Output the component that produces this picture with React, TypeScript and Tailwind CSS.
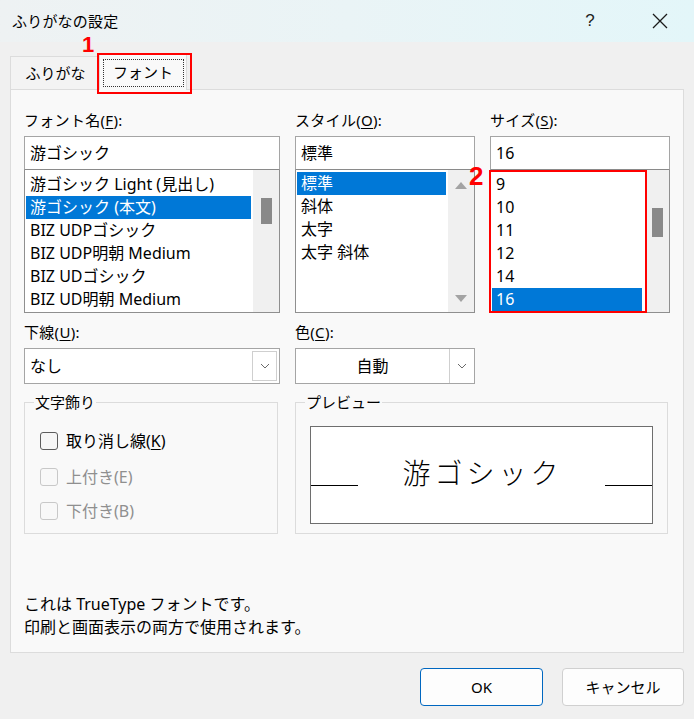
import React from "react";

const U = ({ children }: { children: React.ReactNode }) => (
  <span className="underline underline-offset-[2px] decoration-[1px]">{children}</span>
);

function Chevron() {
  return (
    <svg width="10" height="6" viewBox="0 0 10 6" fill="none">
      <path d="M1 1 L5 5 L9 1" stroke="#6a6a6a" strokeWidth="1" />
    </svg>
  );
}

function ListItem({ text, selected }: { text: string; selected?: boolean }) {
  return (
    <div
      className={
        "h-[23px] ml-[1px] pl-[4px] flex items-center whitespace-nowrap text-[16px] leading-[23px] " +
        (selected ? "bg-[#0078d7] text-white" : "text-black")
      }
    >
      {text}
    </div>
  );
}

export default function App() {
  return (
    <div className="relative w-[694px] h-[719px] overflow-hidden bg-[#f0f0f0] text-black font-['Noto_Sans','Noto_Sans_CJK_JP',sans-serif]">
      {/* Title bar */}
      <div className="h-[42px] flex items-center bg-gradient-to-r from-[#eef2f3] via-[#eaf4f6] to-[#e3f6f9]">
        <span className="ml-[12px] text-[15px] leading-[20px] tracking-[0.2px]">ふりがなの設定</span>
        <div className="ml-auto w-[46px] h-[42px] flex items-center justify-center text-[17px] text-[#222] font-['Liberation_Sans',sans-serif] mr-[24px]">
          ?
        </div>
        <div className="w-[46px] h-[42px] flex items-center justify-center mr-[11px]">
          <svg width="16" height="16" viewBox="0 0 16 16">
            <path d="M1 1 L15 15 M15 1 L1 15" stroke="#1a1a1a" strokeWidth="1.3" />
          </svg>
        </div>
      </div>

      {/* Tabs */}
      <div className="h-[47px] flex items-end pl-[10px]">
        <div className="w-[87px] h-[33px] flex items-center justify-center text-[15px] border-t border-l border-[#dcdcdc] bg-[#f3f3f3] pl-[3px]">
          ふりがな
        </div>
        <div className="relative z-10 w-[88px] h-[37px] ml-[2px] mb-[-1px] bg-[#f9f9f9] border border-b-0 border-[#dcdcdc] flex items-center justify-center">
          <div className="w-[81px] h-[28px] border border-dotted border-[#333] flex items-center justify-center text-[15px] mt-[1px]">
            フォント
          </div>
        </div>
      </div>

      {/* Panel */}
      <div className="mx-[10px] h-[564px] border border-[#dcdcdc] bg-[#f9f9f9] pl-[13px] pr-[11px] pt-[20px] flex flex-col">
        <div className="grid grid-cols-[256px_180px_180px] gap-x-[15px]">
          {/* Column 1 */}
          <div className="flex flex-col">
            <div className="h-[20px] text-[15px] leading-[20px] tracking-[0.3px]">
              フォント名(<U>F</U>):
            </div>
            <div className="mt-[6px] h-[34px] border border-[#a5a5a5] border-b-[#8a8a8a] bg-white flex items-center pl-[5px] text-[16px]">
              游ゴシック
            </div>
            <div className="h-[143px] border border-t-0 border-[#8f8f8f] bg-white flex">
              <div className="flex-1 pt-[3px] pr-[2px]">
                <ListItem text="游ゴシック Light (見出し)" />
                <ListItem text="游ゴシック (本文)" selected />
                <ListItem text="BIZ UDPゴシック" />
                <ListItem text="BIZ UDP明朝 Medium" />
                <ListItem text="BIZ UDゴシック" />
                <ListItem text="BIZ UD明朝 Medium" />
              </div>
              <div className="w-[26px] bg-[#f0f0f0] flex justify-center pt-[28px]">
                <div className="w-[11px] h-[26px] bg-[#898989]" />
              </div>
            </div>
          </div>

          {/* Column 2 */}
          <div className="flex flex-col">
            <div className="h-[20px] text-[15px] leading-[20px] tracking-[0.3px]">
              スタイル(<U>O</U>):
            </div>
            <div className="mt-[6px] h-[34px] border border-[#a5a5a5] border-b-[#8a8a8a] bg-white flex items-center pl-[5px] text-[16px]">
              標準
            </div>
            <div className="h-[143px] border border-t-0 border-[#8f8f8f] bg-white flex">
              <div className="flex-1 pt-[2px] pr-[2px]">
                <ListItem text="標準" selected />
                <ListItem text="斜体" />
                <ListItem text="太字" />
                <ListItem text="太字 斜体" />
              </div>
              <div className="w-[26px] bg-[#f0f0f0] flex flex-col items-center justify-between pt-[12px] pb-[10px]">
                <svg width="12" height="7" viewBox="0 0 12 7">
                  <path d="M0 7 L6 0 L12 7 Z" fill="#a3a3a3" />
                </svg>
                <svg width="12" height="7" viewBox="0 0 12 7">
                  <path d="M0 0 L6 7 L12 0 Z" fill="#a3a3a3" />
                </svg>
              </div>
            </div>
          </div>

          {/* Column 3 */}
          <div className="flex flex-col">
            <div className="h-[20px] text-[15px] leading-[20px] tracking-[0.3px]">
              サイズ(<U>S</U>):
            </div>
            <div className="mt-[6px] h-[34px] border border-[#a5a5a5] border-b-[#8a8a8a] bg-white flex items-center pl-[5px] text-[16px]">
              16
            </div>
            <div className="h-[143px] border border-t-0 border-[#8f8f8f] bg-white flex">
              <div className="flex-1 pt-[3px] pr-[3px]">
                <ListItem text="9" />
                <ListItem text="10" />
                <ListItem text="11" />
                <ListItem text="12" />
                <ListItem text="14" />
                <ListItem text="16" selected />
              </div>
              <div className="w-[24px] bg-[#f0f0f0] flex justify-center pt-[38px]">
                <div className="w-[11px] h-[29px] bg-[#898989]" />
              </div>
            </div>
          </div>

          {/* Row 2: underline / color */}
          <div className="flex flex-col mt-[9px]">
            <div className="h-[20px] text-[15px] leading-[20px] tracking-[0.3px]">
              下線(<U>U</U>):
            </div>
            <div className="mt-[6px] h-[36px] border border-[#a5a5a5] bg-white flex items-center">
              <div className="flex-1 pl-[5px] text-[16px]">なし</div>
              <div className="w-[25px] h-[30px] mr-[2px] border border-[#cfcfcf] bg-white flex items-center justify-center">
                <Chevron />
              </div>
            </div>
          </div>
          <div className="flex flex-col mt-[9px]">
            <div className="h-[20px] text-[15px] leading-[20px] tracking-[0.3px]">
              色(<U>C</U>):
            </div>
            <div className="mt-[6px] h-[36px] border border-[#a5a5a5] bg-white flex items-center">
              <div className="flex-1 text-center text-[16px]">自動</div>
              <div className="w-[25px] h-[34px] border-l border-[#cfcfcf] bg-white flex items-center justify-center">
                <Chevron />
              </div>
            </div>
          </div>
          <div />
        </div>

        {/* Groups */}
        <div className="flex mt-[8px]">
          <fieldset className="w-[254px] h-[142px] border border-[#dcdcdc] pl-[15px]">
            <legend className="ml-[-6px] px-[1px] text-[15px] leading-[20px]">文字飾り</legend>
            <div className="flex items-center h-[20px] mt-[19px]">
              <div className="w-[18px] h-[18px] rounded-[3px] border border-[#5c5c5c] bg-[#f6f6f6]" />
              <span className="ml-[8px] text-[16px]">
                取り消し線(<U>K</U>)
              </span>
            </div>
            <div className="flex items-center h-[20px] mt-[16px] text-[#8f8f8f]">
              <div className="w-[18px] h-[18px] rounded-[3px] border border-[#c8c8c8] bg-[#f8f8f8]" />
              <span className="ml-[8px] text-[16px]">上付き(E)</span>
            </div>
            <div className="flex items-center h-[20px] mt-[14px] text-[#8f8f8f]">
              <div className="w-[18px] h-[18px] rounded-[3px] border border-[#c8c8c8] bg-[#f8f8f8]" />
              <span className="ml-[8px] text-[16px]">下付き(B)</span>
            </div>
          </fieldset>
          <fieldset className="ml-[17px] w-[373px] h-[142px] border border-[#dcdcdc] px-[14px]">
            <legend className="ml-[-5px] px-[1px] text-[15px] leading-[20px]">プレビュー</legend>
            <div className="mt-[14px] h-[98px] border border-[#6e6e6e] bg-white flex items-center relative">
              <div className="w-[47px] h-[1px] bg-black self-end mb-[37px]" />
              <div className="flex-1 text-center text-[28px] leading-[36px] tracking-[4px] font-light mt-[-4px] pl-[2px]">
                游ゴシック
              </div>
              <div className="w-[47px] h-[1px] bg-black self-end mb-[37px]" />
            </div>
          </fieldset>
        </div>

        {/* Footer text */}
        <div className="mt-[59px] text-[16px] leading-[23px]">
          <div>これは TrueType フォントです。</div>
          <div>印刷と画面表示の両方で使用されます。</div>
        </div>
      </div>

      {/* Buttons */}
      <div className="flex justify-end pr-[10px] mt-[15px] gap-[19px]">
        <div className="w-[123px] h-[38px] rounded-[4px] border border-[#0067c0] bg-[#fdfdfd] flex items-center justify-center text-[15px]">
          OK
        </div>
        <div className="w-[122px] h-[38px] rounded-[4px] border border-[#d0d0d0] bg-[#fdfdfd] flex items-center justify-center text-[15px]">
          キャンセル
        </div>
      </div>

      {/* Annotations */}
      <div className="absolute left-[97px] top-[53px] w-[95px] h-[41px] border-2 border-[#ff0000] z-20" />
      <div className="absolute left-[82px] top-[33px] text-[22px] leading-[24px] font-bold text-[#ff0000] font-['Liberation_Sans',sans-serif] z-20">
        1
      </div>
      <div className="absolute left-[489px] top-[170px] w-[158px] h-[143px] border-2 border-[#ff0000] z-20" />
      <div className="absolute left-[469px] top-[162px] text-[26px] leading-[28px] font-bold text-[#ff0000] font-['Liberation_Sans',sans-serif] z-20">
        2
      </div>
    </div>
  );
}
